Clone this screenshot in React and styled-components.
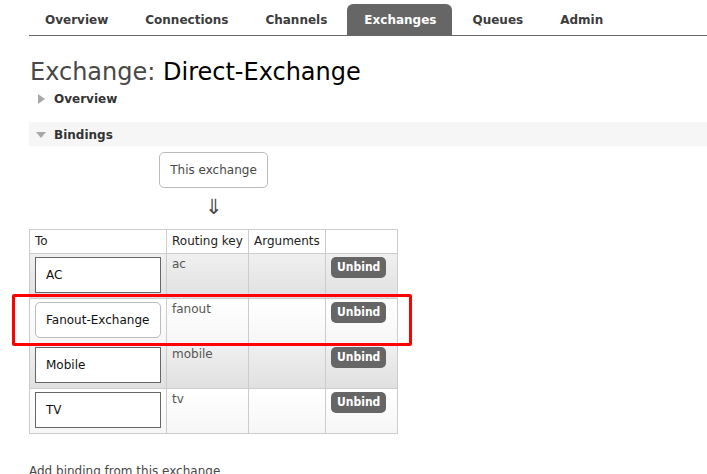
import React from "react";
import styled, { createGlobalStyle, css } from "styled-components";

const GlobalStyle = createGlobalStyle`
  html, body {
    margin: 0;
    padding: 0;
    background: #fff;
  }
  body {
    font-family: "DejaVu Sans", Verdana, sans-serif;
    font-size: 12px;
    color: #484848;
    overflow: hidden;
  }
  * { box-sizing: border-box; }
`;

const Page = styled.div`
  position: relative;
  width: 707px;
  height: 474px;
  overflow: hidden;
`;

const Menu = styled.nav`
  margin-left: 29px;
  padding-top: 4px;
  border-bottom: 1px solid #666;
`;

const MenuList = styled.ul`
  display: flex;
  gap: 3px;
  list-style: none;
  margin: 0 0 0 -1px;
  padding: 0;
`;

const Tab = styled.li`
  height: 31px;
  line-height: 32px;
  padding: 0 17px 0 17px;
  font-weight: bold;
  font-size: 12px;
  color: #3c3c3c;
  border-radius: 6px 6px 0 0;
  ${(p) =>
    p.$active &&
    css`
      background: #666;
      color: #fff;
      padding-right: 16px;
    `}
`;

const Main = styled.main`
  margin-left: 29px;
`;

const Title = styled.h1`
  margin: 22px 0 0 1px;
  font-size: 24px;
  line-height: 28px;
  font-weight: normal;
  color: #484848;
`;

const TitleName = styled.span`
  color: #000;
`;

const Section = styled.section`
  margin-top: ${(p) => p.$gap || 0}px;
`;

const SectionHeader = styled.h2`
  display: flex;
  align-items: center;
  height: 24px;
  margin: 0;
  padding-left: 4px;
  padding-top: 1px;
  font-size: 12px;
  font-weight: bold;
  color: #333;
  background: ${(p) => (p.$open ? "#f6f6f6" : "transparent")};
`;

const Toggle = styled.span`
  width: 16px;
  height: 12px;
  margin-right: 5px;
  display: flex;
  align-items: center;
  justify-content: center;
  &::before {
    content: "";
    display: block;
    width: 0;
    height: 0;
    ${(p) =>
      p.$open
        ? css`
            border-top: 6px solid #a8a8a8;
            border-left: 5.5px solid transparent;
            border-right: 5.5px solid transparent;
            margin-right: 1px;
          `
        : css`
            border-left: 7px solid #a8a8a8;
            border-top: 5px solid transparent;
            border-bottom: 5px solid transparent;
          `}
  }
`;

const Bindings = styled.div`
  display: inline-block;
`;

const Source = styled.div`
  display: flex;
  flex-direction: column;
  align-items: center;
  padding-top: 6px;
`;

const SourceBox = styled.div`
  height: 36px;
  padding: 10px 10px;
  border: 1px solid #bbb;
  border-radius: 5px;
  line-height: 14px;
  color: #484848;
  white-space: nowrap;
`;

const Arrow = styled.div`
  height: 41px;
  font-size: 21px;
  line-height: 38px;
  color: #484848;
  text-align: center;
`;

const Table = styled.table`
  border-collapse: collapse;
  table-layout: fixed;
  border: 1px solid #ccc;
`;

const Th = styled.th`
  width: ${(p) => p.$w}px;
  padding: 4px 5px 5px 5px;
  border: 1px solid #ccc;
  text-align: left;
  font-weight: normal;
  line-height: 14px;
  color: #222;
  background: #fff;
  white-space: nowrap;
`;

const Row = styled.tr`
  background: ${(p) =>
    p.$alt
      ? "linear-gradient(#f0f0f0, #e0e0e0)"
      : "linear-gradient(#ffffff, #f6f6f6)"};
`;

const Td = styled.td`
  vertical-align: top;
  padding: 3px 5px 5px 5px;
  border: 1px solid #ccc;
  line-height: 14px;
  color: #555;
`;

const Target = styled.div`
  display: flex;
  align-items: center;
  width: 126px;
  height: 36px;
  padding-left: 10px;
  background: #fff;
  color: #111;
  white-space: nowrap;
  ${(p) =>
    p.$kind === "exchange"
      ? css`
          border: 1px solid #bbb;
          border-radius: 5px;
        `
      : css`
          border: 1px solid #666;
        `}
`;

const Button = styled.button`
  display: inline-block;
  margin: 0;
  padding: 3px 6px 4px;
  border: 0;
  border-radius: 5px;
  background: #666;
  color: #fff;
  font-family: "DejaVu Sans Condensed", "DejaVu Sans", Verdana, sans-serif;
  font-size: 12px;
  font-weight: bold;
  line-height: 14px;
`;

const AddBinding = styled.div`
  margin-top: 30px;
  line-height: 14px;
  color: #484848;
`;

const Highlight = styled.div`
  position: absolute;
  left: 12px;
  top: 294px;
  width: 400px;
  height: 52px;
  border: 3px solid #ff0000;
  border-radius: 2px;
  pointer-events: none;
`;

const tabs = ["Overview", "Connections", "Channels", "Exchanges", "Queues", "Admin"];

const bindings = [
  { to: "AC", kind: "queue", key: "ac" },
  { to: "Fanout-Exchange", kind: "exchange", key: "fanout" },
  { to: "Mobile", kind: "queue", key: "mobile" },
  { to: "TV", kind: "queue", key: "tv" },
];

export default function App() {
  return (
    <>
      <GlobalStyle />
      <Page>
        <Menu>
          <MenuList>
            {tabs.map((t) => (
              <Tab key={t} $active={t === "Exchanges"}>
                {t}
              </Tab>
            ))}
          </MenuList>
        </Menu>
        <Main>
          <Title>
            Exchange: <TitleName>Direct-Exchange</TitleName>
          </Title>
          <Section>
            <SectionHeader>
              <Toggle />
              Overview
            </SectionHeader>
          </Section>
          <Section $gap={12}>
            <SectionHeader $open>
              <Toggle $open />
              Bindings
            </SectionHeader>
            <Bindings>
              <Source>
                <SourceBox>This exchange</SourceBox>
                <Arrow>⇓</Arrow>
              </Source>
              <Table>
                <thead>
                  <tr>
                    <Th $w={137}>To</Th>
                    <Th $w={82}>Routing key</Th>
                    <Th $w={77}>Arguments</Th>
                    <Th $w={72}></Th>
                  </tr>
                </thead>
                <tbody>
                  {bindings.map((b, i) => (
                    <Row key={b.to} $alt={i % 2 === 0}>
                      <Td>
                        <Target $kind={b.kind}>{b.to}</Target>
                      </Td>
                      <Td>{b.key}</Td>
                      <Td></Td>
                      <Td>
                        <Button>Unbind</Button>
                      </Td>
                    </Row>
                  ))}
                </tbody>
              </Table>
            </Bindings>
          </Section>
          <AddBinding>Add binding from this exchange</AddBinding>
        </Main>
        <Highlight />
      </Page>
    </>
  );
}
